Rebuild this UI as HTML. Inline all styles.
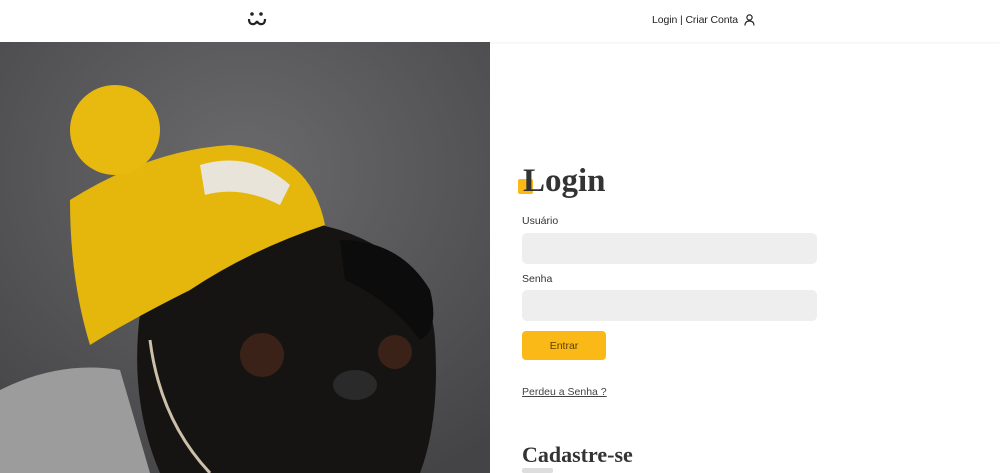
<!DOCTYPE html>
<html><head><meta charset="utf-8"><style>
*{margin:0;padding:0;box-sizing:border-box}
body{width:1000px;height:473px;overflow:hidden;background:#fff;font-family:"Liberation Sans",sans-serif;position:relative}
.hdr{position:absolute;left:0;top:0;width:1000px;height:42px;background:#fff;box-shadow:0 1px 2px rgba(0,0,0,.06)}
.nav{position:absolute;left:652px;top:14px;font-size:10.5px;color:#222;letter-spacing:-0.1px}
.img{position:absolute;left:0;top:42px;width:490px;height:431px;overflow:hidden}
.t{position:absolute;font-family:"Liberation Serif",serif;font-weight:bold;color:#333}
.lbl{position:absolute;left:522px;font-size:10.5px;color:#333}
.inp{position:absolute;left:522px;width:295px;height:31px;background:#eee;border-radius:5px}
</style></head><body>
<div class="hdr">
<svg style="position:absolute;left:247px;top:11px" width="20" height="16" viewBox="0 0 20 16"><circle cx="5" cy="3" r="1.8" fill="#222"/><circle cx="14" cy="3" r="1.8" fill="#222"/><path d="M2 8 Q2 14 7 13 Q9.5 12 10 10 Q10.5 12 13 13 Q18 14 18 8" stroke="#222" stroke-width="2.2" fill="none"/></svg>
<div class="nav">Login | Criar Conta</div>
<svg style="position:absolute;left:744px;top:14px" width="11" height="12" viewBox="0 0 11 12"><circle cx="5.5" cy="3.5" r="2.6" stroke="#222" stroke-width="1.2" fill="none"/><path d="M1 11.5 Q1 7 5.5 7 Q10 7 10 11.5" stroke="#222" stroke-width="1.2" fill="none"/></svg>
</div>
<div class="img"><svg width="490" height="431" viewBox="0 42 490 431">
<defs><radialGradient id="bg" cx="0.5" cy="0.3" r="0.8"><stop offset="0" stop-color="#6a6a6c"/><stop offset="1" stop-color="#444446"/></radialGradient></defs>
<rect x="0" y="42" width="490" height="431" fill="url(#bg)"/>
<path d="M0 390 Q60 360 120 370 L150 473 L0 473Z" fill="#9c9c9c"/>
<path d="M150 260 Q240 200 340 230 Q430 260 435 340 Q440 420 420 473 L160 473 Q120 380 150 260Z" fill="#151412"/>
<path d="M340 240 Q400 240 430 290 Q440 330 420 340 Q390 300 345 280Z" fill="#0c0c0c"/>
<path d="M70 200 Q150 150 230 145 Q310 150 325 225 Q250 250 190 290 Q130 320 90 345 Q70 280 70 200Z" fill="#e5b70c"/>
<circle cx="115" cy="130" r="45" fill="#e8b90e"/>
<path d="M200 165 Q250 150 290 185 L280 205 Q240 185 205 195Z" fill="#e8e4da"/>
<circle cx="262" cy="355" r="22" fill="#3b2218"/><circle cx="395" cy="352" r="17" fill="#3b2218"/>
<ellipse cx="355" cy="385" rx="22" ry="15" fill="#2a2a2a"/>
<path d="M150 340 Q160 420 210 473" stroke="#cdbfa8" stroke-width="3" fill="none"/>
</svg></div>
<div style="position:absolute;left:518px;top:179px;width:15px;height:15px;background:#fbb917;border-radius:2px"></div>
<div class="t" style="left:523px;top:163px;font-size:33px">Login</div>
<div class="lbl" style="top:215px">Usuário</div>
<div class="inp" style="top:233px"></div>
<div class="lbl" style="top:273px">Senha</div>
<div class="inp" style="top:290px"></div>
<div style="position:absolute;left:522px;top:331px;width:84px;height:29px;background:#fbb917;border-radius:4px;font-size:10.5px;color:#5a3f00;text-align:center;line-height:30px">Entrar</div>
<div style="position:absolute;left:522px;top:386px;font-size:10.5px;color:#444;text-decoration:underline">Perdeu a Senha ?</div>
<div class="t" style="left:522px;top:442px;font-size:22px">Cadastre-se</div>
<div style="position:absolute;left:522px;top:468px;width:31px;height:5px;background:#ddd;border-radius:2px"></div>
</body></html>
